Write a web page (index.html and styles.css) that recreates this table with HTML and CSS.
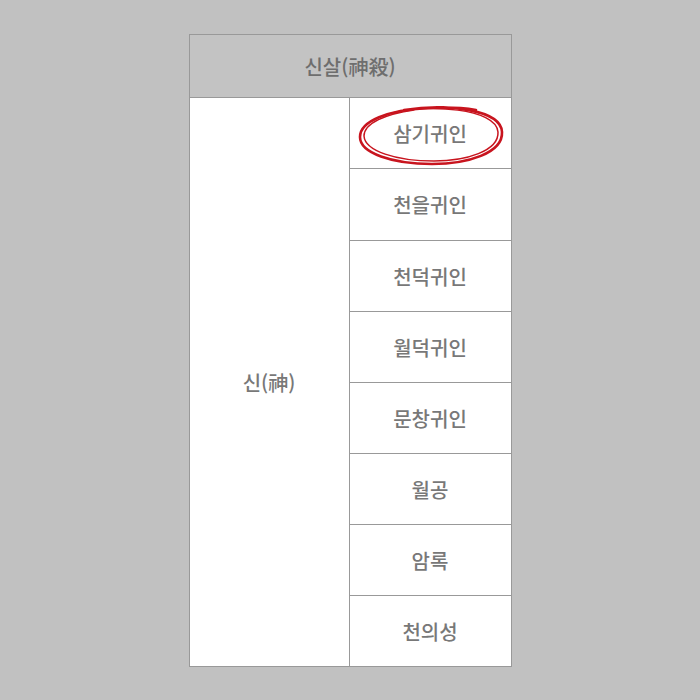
FILE: index.html
```html
<!DOCTYPE html>
<html lang="ko">
<head>
<meta charset="utf-8">
<link rel="stylesheet" href="styles.css">
</head>
<body>
<div class="table">
  <div class="head">신살(神殺)</div>
  <div class="body">
    <div class="group">신(神)</div>
    <div class="list">
      <div class="item marked">삼기귀인
        <svg class="circle" viewBox="0 0 148 66" width="148" height="66">
          <path d="M46 9 C 90 2, 143 9, 144 31 C 145 52, 110 63, 74 63 C 34 63, 2 52, 2 36 C 2 20, 30 9, 70 7 C 90 6, 106 7, 118 9" fill="none" stroke="#c8141e" stroke-width="2.6" stroke-linecap="round"/>
          <path d="M34 12 C 70 3, 138 7, 140 31 C 141 50, 108 60, 76 60 C 38 60, 7 50, 6 35 C 6 22, 28 13, 56 9" fill="none" stroke="#c8141e" stroke-width="1.5" stroke-linecap="round"/>
        </svg>
      </div>
      <div class="item">천을귀인</div>
      <div class="item">천덕귀인</div>
      <div class="item">월덕귀인</div>
      <div class="item">문창귀인</div>
      <div class="item">월공</div>
      <div class="item">암록</div>
      <div class="item">천의성</div>
    </div>
  </div>
</div>
</body>
</html>
```
FILE: styles.css
```css
html, body {
  margin: 0;
  padding: 0;
  background: #c1c1c1;
}
body {
  width: 700px;
  height: 700px;
  font-family: "Noto Sans CJK KR", "Noto Sans", sans-serif;
  color: #787878;
}
.table {
  width: 321px;
  margin: 34px auto 0;
  border: 1px solid #999;
  background: #fff;
}
.head {
  height: 62px;
  background: #c3c3c3;
  border-bottom: 1px solid #999;
  display: flex;
  align-items: center;
  justify-content: center;
  font-size: 20px;
  font-weight: 500;
  color: #6e6e6e;
}
.body {
  display: grid;
  grid-template-columns: 160px 1fr;
}
.group {
  border-right: 1px solid #999;
  display: flex;
  align-items: center;
  justify-content: center;
  font-size: 20px;
  font-weight: 500;
}
.list {
  display: flex;
  flex-direction: column;
}
.item {
  height: 70px;
  border-top: 1px solid #999;
  display: flex;
  align-items: center;
  justify-content: center;
  font-size: 20px;
  font-weight: 500;
  position: relative;
}
.item:nth-child(2) {
  height: 71px;
}
.item:first-child {
  border-top: none;
}
.circle {
  position: absolute;
  left: 8px;
  top: 3px;
}
```
